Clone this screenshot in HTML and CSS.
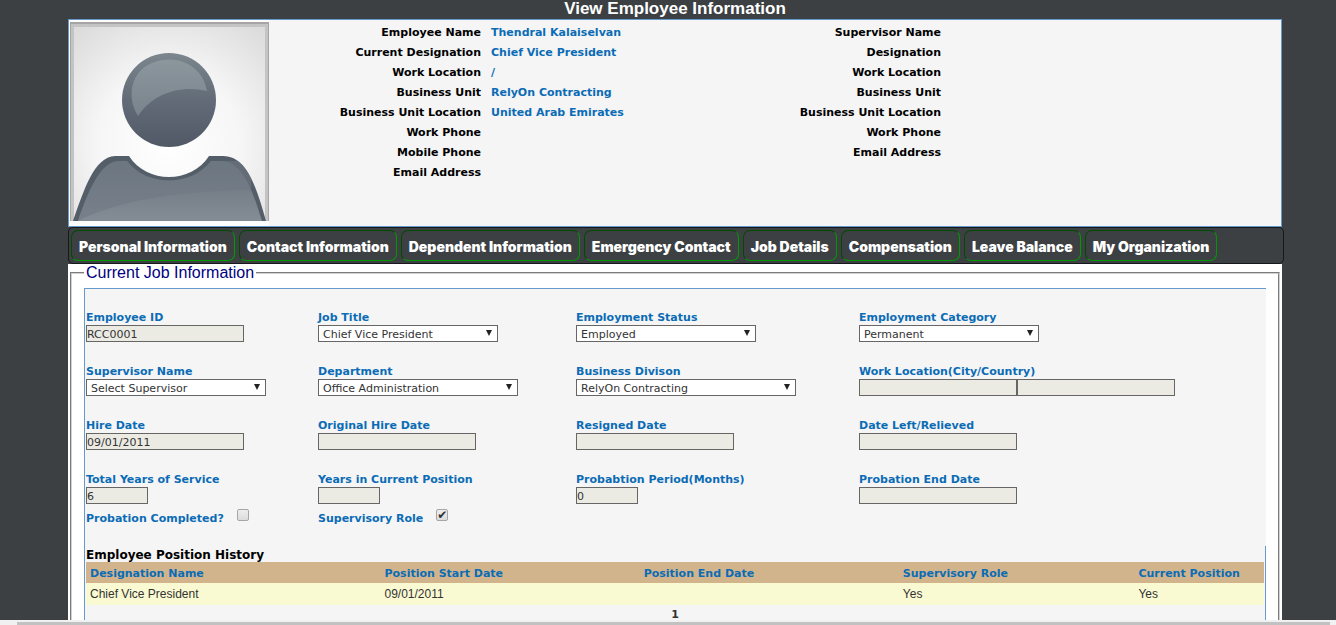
FILE: index.html
```html
<!DOCTYPE html>
<html lang="en">
<head>
<meta charset="utf-8">
<title>View Employee Information</title>
<link rel="stylesheet" href="styles.css">
</head>
<body>
<main class="page">
  <h1 class="page-title">View Employee Information</h1>

  <section class="profile">
    <div class="photo-cell">
      <svg class="photo" viewBox="0 0 199 199" role="img" aria-label="Employee photo">
        <defs>
          <radialGradient id="bg" cx="50%" cy="60%" r="75%">
            <stop offset="0" stop-color="#ffffff"/><stop offset=".5" stop-color="#f6f6f6"/><stop offset="1" stop-color="#dcdcdc"/>
          </radialGradient>
          <linearGradient id="head" x1="0" y1="0" x2="0" y2="1">
            <stop offset="0" stop-color="#7b868d"/><stop offset=".5" stop-color="#626b77"/><stop offset="1" stop-color="#505965"/>
          </linearGradient>
          <linearGradient id="shine" x1="0" y1="0" x2="0" y2="1">
            <stop offset="0" stop-color="#8b969d"/><stop offset="1" stop-color="#78838c"/>
          </linearGradient>
          <linearGradient id="body" x1="0" y1="0" x2="0" y2="1">
            <stop offset="0" stop-color="#69737d"/><stop offset="1" stop-color="#848c95"/>
          </linearGradient>
          <clipPath id="torso"><path d="M4 199C14 168 24 134 45 134H59C77 162 121 162 139 134H153C178 134 187 168 196 199Z"/></clipPath>
        </defs>
        <rect width="199" height="199" fill="#a5a5a5"/>
        <rect x="1" y="2" width="197" height="197" fill="#c4c4c4"/>
        <rect x="4" y="5" width="191" height="194" fill="url(#bg)"/>
        <circle cx="99" cy="78" r="47" fill="url(#head)"/>
        <path d="M68 94C56 75 61 49 82 41C107 31 133 44 137 69C112 63 84 70 68 94Z" fill="url(#shine)"/>
        <path d="M3 199C14 168 24 135 45 134H59C77 162 121 162 139 134H153C178 134 187 168 196 199Z" fill="#545e69"/>
        <g clip-path="url(#torso)">
          <path d="M8 199C18 170 30 140 48 139H57C77 165 121 165 141 139H153C174 141 184 173 192 199Z" fill="url(#body)"/>
          <path d="M8 199C54 176 115 169 181 168L182 139H141C121 165 77 165 57 139H48C30 140 18 170 8 199Z" fill="#6f7983" opacity=".55"/>
        </g>
      </svg>
    </div>
    <dl class="facts employee">
      <dt>Employee Name</dt><dd>Thendral Kalaiselvan</dd>
      <dt>Current Designation</dt><dd>Chief Vice President</dd>
      <dt>Work Location</dt><dd>/</dd>
      <dt>Business Unit</dt><dd>RelyOn Contracting</dd>
      <dt>Business Unit Location</dt><dd>United Arab Emirates</dd>
      <dt>Work Phone</dt><dd></dd>
      <dt>Mobile Phone</dt><dd></dd>
      <dt>Email Address</dt><dd></dd>
    </dl>
    <dl class="facts supervisor">
      <dt>Supervisor Name</dt><dd></dd>
      <dt>Designation</dt><dd></dd>
      <dt>Work Location</dt><dd></dd>
      <dt>Business Unit</dt><dd></dd>
      <dt>Business Unit Location</dt><dd></dd>
      <dt>Work Phone</dt><dd></dd>
      <dt>Email Address</dt><dd></dd>
    </dl>
  </section>

  <nav class="tabs">
    <a href="#personal">Personal Information</a>
    <a href="#contact">Contact Information</a>
    <a href="#dependent">Dependent Information</a>
    <a href="#emergency">Emergency Contact</a>
    <a href="#job">Job Details</a>
    <a href="#compensation">Compensation</a>
    <a href="#leave">Leave Balance</a>
    <a href="#organization">My Organization</a>
  </nav>

  <div class="content">
    <fieldset class="job">
      <legend>Current Job Information</legend>
      <div class="panel">
        <div class="fields">
          <div class="field"><label for="emp-id">Employee ID</label><input id="emp-id" type="text" value="RCC0001" readonly></div>
          <div class="field"><label for="title">Job Title</label><span class="pick"><select id="title"><option>Chief Vice President</option></select></span></div>
          <div class="field"><label for="status">Employment Status</label><span class="pick"><select id="status"><option>Employed</option></select></span></div>
          <div class="field"><label for="category">Employment Category</label><span class="pick"><select id="category"><option>Permanent</option></select></span></div>

          <div class="field"><label for="sup">Supervisor Name</label><span class="pick"><select id="sup"><option>Select Supervisor</option></select></span></div>
          <div class="field"><label for="dept">Department</label><span class="pick medium"><select id="dept"><option>Office Administration</option></select></span></div>
          <div class="field"><label for="division">Business Divison</label><span class="pick wide"><select id="division"><option>RelyOn Contracting</option></select></span></div>
          <div class="field"><label for="city">Work Location(City/Country)</label><span class="pair"><input id="city" type="text" readonly><input type="text" aria-label="Country" readonly></span></div>

          <div class="field"><label for="hire">Hire Date</label><input id="hire" type="text" value="09/01/2011" readonly></div>
          <div class="field"><label for="orig">Original Hire Date</label><input id="orig" type="text" readonly></div>
          <div class="field"><label for="resigned">Resigned Date</label><input id="resigned" type="text" readonly></div>
          <div class="field"><label for="left">Date Left/Relieved</label><input id="left" type="text" readonly></div>

          <div class="field"><label for="service">Total Years of Service</label><input id="service" class="short" type="text" value="6" readonly></div>
          <div class="field"><label for="years">Years in Current Position</label><input id="years" class="short" type="text" readonly></div>
          <div class="field"><label for="probation">Probabtion Period(Months)</label><input id="probation" class="short" type="text" value="0" readonly></div>
          <div class="field"><label for="prob-end">Probation End Date</label><input id="prob-end" type="text" readonly></div>
        </div>
        <div class="fields checks">
          <div class="check"><label for="completed">Probation Completed?</label><input id="completed" type="checkbox"></div>
          <div class="check"><label for="role">Supervisory Role</label><input id="role" type="checkbox" checked></div>
        </div>
        <section class="history">
          <h2>Employee Position History</h2>
          <table>
            <colgroup><col class="c-name"><col class="c-start"><col class="c-end"><col class="c-role"><col class="c-current"></colgroup>
            <thead><tr><th>Designation Name</th><th>Position Start Date</th><th>Position End Date</th><th>Supervisory Role</th><th>Current Position</th></tr></thead>
            <tbody><tr><td>Chief Vice President</td><td>09/01/2011</td><td></td><td>Yes</td><td>Yes</td></tr></tbody>
          </table>
          <div class="pager">1</div>
        </section>
      </div>
    </fieldset>
  </div>
</main>
<div class="scroll-track"><div class="scroll-thumb"></div></div>
</body>
</html>
```

FILE: styles.css
```css
* { box-sizing: border-box; }

body {
  margin: 0;
  height: 100vh;
  display: flex;
  flex-direction: column;
  overflow: hidden;
  background: #3c4043;
  font: 11px/16px Verdana, "DejaVu Sans", sans-serif;
}

.page {
  flex: 1;
  min-height: 0;
  overflow: hidden;
  padding: 0 54px 0 68px;
}

.page-title {
  margin: 0;
  color: #fff;
  font: bold 17px/17px "Liberation Sans", Arial, sans-serif;
  padding-bottom: 2px;
  text-align: center;
}

.profile {
  display: flex;
  background: #f5f5f5;
  border: 1px solid #6699cc;
}

.photo-cell {
  flex: none;
  padding: 2px 0 5px 1px;
  background: #fdfdfd;
}

.photo { display: block; width: 199px; height: 199px; }

.facts {
  display: grid;
  grid-auto-rows: 20px;
  align-content: start;
  margin: 0;
  padding-top: 3px;
  line-height: 20px;
  font-weight: bold;
}

.employee { flex: 472; grid-template-columns: 212fr 260fr; }
.supervisor { flex: 540; grid-template-columns: 200fr 340fr; }
.facts dt { text-align: right; white-space: nowrap; }
.facts dd { margin: 0; padding-left: 10px; color: #0b6cb5; }

.tabs {
  display: flex;
  gap: 4px;
  margin-right: -2px;
  padding: 2px;
  border: 1px solid #161819;
  border-radius: 5px;
}

.tabs a {
  padding: 1px 7px 0;
  border: 1px solid;
  border-color: #004b00 #009900 #009900 #004b00;
  border-radius: 7px;
  color: #fff;
  font: 900 14px/29px "Arial Black", Inter, sans-serif;
  height: 31px;
  text-decoration: none;
  white-space: nowrap;
}

.content { background: #fff; padding: 0 2px; }

.job {
  min-width: 0;
  margin: 0;
  padding: 7px 12px 20px;
  border: 2px groove #d0d0d0;
}

.job legend {
  padding: 0 2px;
  color: #000080;
  font: 16px/17px "Liberation Sans", Arial, sans-serif;
}

.panel {
  background: #f5f5f5;
  border: solid #6699cc;
  border-width: 1px 0 0 1px;
}

.fields {
  display: grid;
  grid-template-columns: 232fr 258fr 283fr 407fr;
  row-gap: 19px;
  padding: 18px 0 0 1px;
}

.field { display: flex; flex-direction: column; align-items: flex-start; }
.field label, .check label { color: #0b6cb5; font-weight: bold; white-space: nowrap; }
.field label { height: 18px; padding-top: 3px; line-height: 16px; }

.field input, .field select {
  display: block;
  width: 158px;
  height: 17px;
  margin: 0;
  padding: 1px 0 0;
  border: 1px solid #666;
  border-radius: 0;
  background: #ebebe4;
  color: #333;
  font: 11px/15px Verdana, "DejaVu Sans", sans-serif;
}

.field .short { width: 62px; }
.pair { display: flex; }

.pick { position: relative; width: 180px; }
.pick.medium { width: 200px; }
.pick.wide { width: 220px; }
.field .pick select { width: 100%; padding: 1px 4px 0; background: #fff; appearance: none; }
.pick::after {
  content: "";
  position: absolute;
  top: 5px;
  right: 6px;
  border: solid transparent;
  border-width: 6px 3px 0;
  border-top-color: #222;
  pointer-events: none;
}

.checks { padding-top: 5px; }
.check { display: flex; align-items: flex-start; gap: 13px; }
.check label { padding-top: 2px; line-height: 15px; }
.check input {
  appearance: none;
  display: grid;
  place-items: center;
  width: 12px;
  height: 12px;
  margin: 0;
  border: 1px solid #a6a6a6;
  border-radius: 2px;
  background: linear-gradient(#ededed, #dcdcdc);
}
.check input:checked::after { content: "✔"; color: #333; font: 12px/10px "DejaVu Sans", sans-serif; }

.history { margin-top: 20px; padding: 0 1px; border-right: 1px solid #6699cc; }
.history h2 { margin: 0; padding-top: 2px; font-size: 12px; line-height: 14px; }
.history table { width: 100%; table-layout: fixed; border-collapse: collapse; }
.c-name { width: 25%; }
.c-start, .c-end { width: 22%; }
.c-role { width: 20%; }
.c-current { width: 11%; }
.history th, .history td { padding: 0 4px; text-align: left; white-space: nowrap; }
.history th { height: 21px; padding-top: 2px; background: #d2b48c; color: #0b6cb5; }
.history td { height: 22px; background: #fafad2; color: #333; font: 12px/20px "Liberation Sans", Arial, sans-serif; }
.pager { padding-top: 5px; color: #333; font-weight: bold; line-height: 10px; text-align: center; }

.scroll-track { flex: none; height: 5px; padding: 2px 6px 0 17px; background: #f1f1f1; }
.scroll-thumb { height: 3px; background: #c1c1c1; }
```
